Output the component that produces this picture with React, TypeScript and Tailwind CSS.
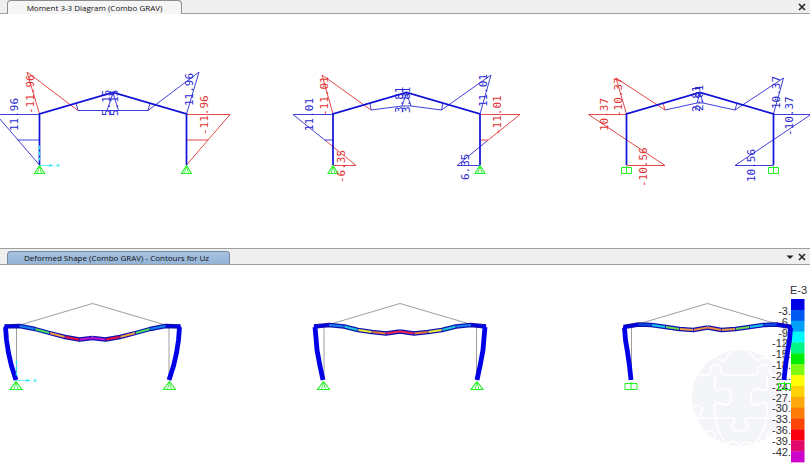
import React from "react";

const BLUE = "#2a2ad2";
const RED = "#e23434";
const GREEN = "#22f022";

function CloseButton() {
  return (
    <button type="button" aria-label="Close" className="flex h-3 w-3 items-center justify-center">
      <svg viewBox="0 0 8 8" className="h-2 w-2" stroke="#222" strokeWidth="1.5">
        <path d="M1 1 7 7M7 1 1 7" />
      </svg>
    </button>
  );
}

function MenuButton() {
  return (
    <button type="button" aria-label="View menu" className="flex h-3 w-3 items-center justify-center">
      <svg viewBox="0 0 8 8" className="h-2 w-2" fill="#222">
        <path d="M0.5 2.5H7.5L4 6Z" />
      </svg>
    </button>
  );
}

/** Pinned (triangle) or fixed (box) base at x, y. */
function Support({ x, y, fixed = false, size = 5 }: { x: number; y: number; fixed?: boolean; size?: number }) {
  if (fixed) {
    return (
      <path
        d={`M${x - size} ${y + 2.5}H${x + size}V${y + 8.5}H${x - size}ZM${x} ${y + 1}V${y + 9}`}
        fill="none"
        stroke={GREEN}
        strokeWidth="1"
      />
    );
  }
  return (
    <g fill="none" stroke={GREEN}>
      <path d={`M${x} ${y + 0.5}L${x + size} ${y + 8.5}H${x - size}Z`} strokeWidth="1.1" />
      <path d={`M${x - 2} ${y + 8.5}L${x} ${y + 1}L${x + 2} ${y + 8.5}`} strokeWidth="0.8" />
    </g>
  );
}

function Axes({ x, y }: { x: number; y: number }) {
  return (
    <g stroke="#2be4f4" fill="#2be4f4" strokeWidth="1">
      <path d={`M${x} ${y}H${x + 11}`} opacity="0.7" />
      <path d={`M${x + 10} ${y - 1.5}L${x + 14} ${y}L${x + 10} ${y + 1.5}Z`} stroke="none" />
      <path d={`M${x + 17} ${y - 1.5}l3 3m0 -3l-3 3`} />
      <path d={`M${x} ${y - 20}v4m0 2v4m0 2v3`} strokeWidth="1.5" />
    </g>
  );
}

function Value({ x, y, color, children }: { x: number; y: number; color: string; children: string }) {
  return (
    <text
      transform={`translate(${x} ${y}) rotate(-90)`}
      fill={color}
      className="font-['DejaVu_Sans_Mono','Liberation_Mono',monospace] text-[11px]"
    >
      {children}
    </text>
  );
}

type Label = [number, number, string, string];
type MomentData = { cx: number; blue: string; red: string; fixed: boolean; labels: Label[] };

const MOMENTS: MomentData[] = [
  {
    cx: 113,
    fixed: false,
    blue: "M39.5 114.5H-4L39.5 165M17.5 140H39.5M76 103L78 110.5H148L150 103M148 110.5L199 72L186.5 114M107 110.5L113 93L118.5 110.5",
    red: "M39.5 114L27 72L78 110.5M186.5 114.5H230L186.5 165M186.5 140H208",
    labels: [
      [18, 131, BLUE, "11.96"],
      [34, 114, RED, "-11.96"],
      [110, 116, BLUE, "5.15"],
      [118, 116, BLUE, "5.15"],
      [193, 106, BLUE, "11.96"],
      [208, 135, RED, "-11.96"],
    ],
  },
  {
    cx: 406.5,
    fixed: false,
    blue: "M333 114.5H293L326 141M325 140H333M370 103L371 110L402 106H411L441.5 110L443 103M441.5 110L491 75L480 114M402 106L406.5 93L411 106M487 141L457 165.5H480",
    red: "M326 141L356 165.5H333M333 114L322 75L371 110M480 114.5H520L487 141M480 140H488",
    labels: [
      [313, 131, BLUE, "11.01"],
      [328, 116, RED, "-11.01"],
      [345, 183, RED, "-6.35"],
      [403, 113, BLUE, "3.81"],
      [410, 113, BLUE, "3.81"],
      [487, 107, BLUE, "11.01"],
      [501, 135, RED, "-11.01"],
      [469, 180, BLUE, "6.35"],
    ],
  },
  {
    cx: 700,
    fixed: true,
    blue: "M665 110L697 103H703L735 110L737 103M735 110L783.5 78L773.5 114M697 103L700 93L703 103M773.5 114.5H811L735 165.5H773.5",
    red: "M626.5 114.5H588.5L665 165.5H626.5M626.5 114L616 78L665 110L663 103",
    labels: [
      [608, 131, RED, "10.37"],
      [622, 117, RED, "-10.37"],
      [647, 187, RED, "-10.56"],
      [700, 112, BLUE, "2.81"],
      [703, 111, BLUE, "2.81"],
      [780, 109, BLUE, "10.37"],
      [793, 136, BLUE, "-10.37"],
      [755, 182, BLUE, "10.56"],
    ],
  },
];

function MomentFrame({ cx, blue, red, fixed, labels }: MomentData) {
  const left = cx - 73.5;
  const right = cx + 73.5;
  return (
    <g fill="none">
      <path d={blue} stroke={BLUE} strokeWidth="0.9" />
      <path d={red} stroke={RED} strokeWidth="0.9" />
      <path d={`M${left} 165V114L${cx} 92.5L${right} 114V165`} stroke="#1010d8" strokeWidth="1.7" />
      <Support x={left} y={165} fixed={fixed} />
      <Support x={right} y={165} fixed={fixed} />
      {labels.map(([x, y, color, text]) => (
        <Value key={`${x}-${y}`} x={x} y={y} color={color}>
          {text}
        </Value>
      ))}
    </g>
  );
}

type ShapeData = {
  cx: number;
  fixed: boolean;
  /** Half of the deflected shape as offsets from the centre line: base to eave. */
  column: number[][];
  /** Eave to ridge. */
  beam: number[][];
  /** Contour colour of each beam piece. */
  colors: string[];
};

const SHAPES: ShapeData[] = [
  {
    cx: 92.5,
    fixed: false,
    column: [[-76.5, 380], [-81, 366], [-84, 353], [-86, 340], [-87, 327]],
    beam: [[-88, 326.5], [-73, 326], [-57.5, 329], [-43, 333], [-27.5, 337], [-13, 339.5], [0, 338]],
    colors: ["#0000e6", "#1684ec", "#44e05a", "#eea03c", "#ee1438", "#c010d0"],
  },
  {
    cx: 400,
    fixed: false,
    column: [[-77, 380], [-80, 366], [-83, 350], [-84, 338], [-85, 327]],
    beam: [[-86, 326.5], [-71, 325], [-56, 326.5], [-42, 330], [-28, 332], [-14, 333.5], [0, 331.5]],
    colors: ["#0000e6", "#1684ec", "#16ccd8", "#f2ec30", "#ee7838", "#ee2450"],
  },
  {
    cx: 707.5,
    fixed: true,
    column: [[-76.5, 380], [-78, 366], [-80, 352], [-82, 340], [-83, 328]],
    beam: [[-84, 327], [-69, 324.5], [-56, 325], [-42, 327], [-28, 329], [-14, 330], [0, 327.5]],
    colors: ["#0000e6", "#0a50e0", "#16ccec", "#70d850", "#eea040", "#ee8a40"],
  },
];

function HalfShape({ cx, side, column, beam, colors }: ShapeData & { side: number }) {
  const at = ([x, y]: number[]) => `${cx + x * side} ${y}`;
  const line = (points: number[][]) => "M" + points.map(at).join("L");
  return (
    <g fill="none" strokeLinejoin="round">
      <path d={line(beam)} stroke="#1010b4" strokeWidth="4.4" />
      {colors.map((color, i) => (
        <path key={i} d={line([beam[i], beam[i + 1]])} stroke={color} strokeWidth="2" />
      ))}
      {beam.slice(2, 6).map((p, i) => (
        <path key={i} d={`M${cx + p[0] * side} ${p[1] - 1.5}v3`} stroke="#1010b4" strokeWidth="0.8" />
      ))}
      <path d={line([...column, beam[0]])} stroke="#0000e8" strokeWidth="4.8" />
    </g>
  );
}

function DeformedFrame(shape: ShapeData) {
  const left = shape.cx - 76.5;
  const right = shape.cx + 77;
  return (
    <g>
      <path
        d={`M${left + 0.5} 380V326L${shape.cx} 303.5L${right - 0.5} 326V380`}
        fill="none"
        stroke="#858585"
        strokeWidth="0.8"
      />
      <HalfShape {...shape} side={-1} />
      <HalfShape {...shape} side={1} />
      <Support x={left} y={381} fixed={shape.fixed} size={6} />
      <Support x={right} y={381} fixed={shape.fixed} size={6} />
    </g>
  );
}

const SCALE: [string, string][] = [
  ["#0000e6", "-3"],
  ["#0058f2", "-6"],
  ["#00a0f8", "-9"],
  ["#00fafa", "-12"],
  ["#00f488", "-15"],
  ["#00ee08", "-18"],
  ["#80fa10", "-21"],
  ["#fdfd08", "-24"],
  ["#fdd208", "-27"],
  ["#fda80c", "-30"],
  ["#fc7c08", "-33"],
  ["#fa4408", "-36"],
  ["#f80010", "-39"],
  ["#e2086c", "-42"],
  ["#cc04cc", ""],
];

function Scale() {
  return (
    <g className="font-['Liberation_Sans',Arial,sans-serif]" fill="#303030">
      <text x="807" y="294" textAnchor="end" className="text-[11px]">
        E-3
      </text>
      {SCALE.map(([color, label], i) => (
        <g key={color}>
          <rect x="791" y={299 + i * 10.87} width="13.5" height="11.2" fill={color} />
          {label && (
            <text x="791" y={315 + i * 10.83} textAnchor="end" className="text-[11px]">
              {label}.
            </text>
          )}
        </g>
      ))}
    </g>
  );
}

function Watermark() {
  return (
    <g fill="none" stroke="#ffffff" strokeWidth="1.7" strokeLinejoin="round">
      <circle cx="740" cy="398" r="48" fill="#f4f5f9" stroke="none" />
      <path d="M694 375H708C712 375 709 369 712 366C716 363 723 365 721 370C720 374 723 375 727 375H748C754 375 759 375 758 370C757 364 766 363 769 367C771 371 768 375 774 375H788" />
      <path d="M692 418H731C735 418 736 421 733 423C729 428 735 431 740 431C747 431 751 427 746 423C743 420 746 418 750 418H788" />
      <path d="M715 375V387C715 392 719 391 723 389C728 387 732 392 731 398C731 405 726 406 722 404C718 402 714 403 714 408L717 425C718 433 723 440 728 446" />
      <path d="M767 375V387C767 392 763 391 759 389C754 387 750 392 751 398C751 405 756 406 760 404C764 402 768 403 768 408L765 425C763 433 758 440 753 446" />
      <path d="M712 357C719 355 717 362 723 361C728 360 725 354 732 353M748 352C753 352 751 359 757 360C763 360 762 356 768 358" />
      <path d="M693 407C698 404 704 407 702 412C700 416 697 416 695 420M706 432C711 429 717 433 714 439M768 440C764 435 768 430 774 432M727 444C732 440 735 441 739 445C744 441 748 441 753 444" />
    </g>
  );
}

export default function App() {
  return (
    <main className="w-full bg-white font-['Open_Sans','Noto_Sans',sans-serif] text-[8px] leading-3 text-[#111]">
      <section aria-label="Moment diagram">
        <header className="flex h-[14px] items-end border-b border-[#a0a0a0] bg-[#efefef] pr-0.5 pl-[7px]">
          <button
            type="button"
            className="-mb-px h-[14px] w-[175px] rounded-t-sm border border-b-0 border-[#8c8c8c] bg-[#f5f5f5] text-center whitespace-nowrap"
          >
            Moment 3-3 Diagram (Combo GRAV)
          </button>
          <div className="ml-auto flex">
            <CloseButton />
          </div>
        </header>
        <svg viewBox="0 14 810 234" className="block h-auto w-full" role="img" aria-label="Moment 3-3 diagrams of three frames">
          {MOMENTS.map((m) => (
            <MomentFrame key={m.cx} {...m} />
          ))}
          <Axes x={39.5} y={165.5} />
        </svg>
      </section>
      <section aria-label="Deformed shape">
        <header className="flex h-[17px] items-end border-t border-b border-[#a0a0a0] bg-[#efefef] pr-0.5 pl-[7px]">
          <button
            type="button"
            className="h-[13px] w-[223px] rounded-t-sm border border-b-0 border-[#7488a4] bg-linear-to-b from-[#a9c4e2] to-[#93b3d6] pr-1 text-center whitespace-nowrap"
          >
            Deformed Shape (Combo GRAV) - Contours for Uz
          </button>
          <div className="mb-px ml-auto flex">
            <MenuButton />
            <CloseButton />
          </div>
        </header>
        <svg viewBox="0 265 810 202" className="block h-auto w-full" role="img" aria-label="Deformed shapes with vertical displacement contours">
          <Watermark />
          <Scale />
          {SHAPES.map((s) => (
            <DeformedFrame key={s.cx} {...s} />
          ))}
          <Axes x={16.5} y={380.5} />
        </svg>
      </section>
    </main>
  );
}
